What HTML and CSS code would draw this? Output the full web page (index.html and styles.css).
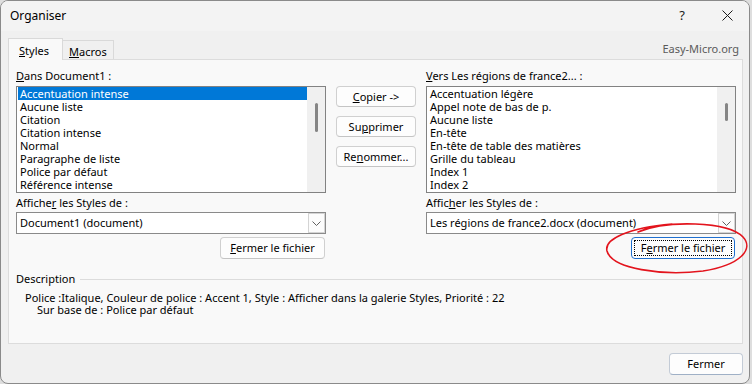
FILE: index.html
```html
<!DOCTYPE html>
<html lang="fr">
<head>
<meta charset="utf-8">
<title>Organiser</title>
<link rel="stylesheet" href="styles.css">
</head>
<body>
<div class="window">
  <div class="titlebar">
    <span class="title">Organiser</span>
    <div class="caption">
      <span class="cbtn help">?</span>
      <span class="cbtn close">
        <svg width="11" height="11" viewBox="0 0 11 11"><path d="M0.5 0.5 L10.5 10.5 M10.5 0.5 L0.5 10.5" stroke="#1a1a1a" stroke-width="1" fill="none"/></svg>
      </span>
    </div>
  </div>

  <div class="tabs">
    <div class="tab active"><u>S</u>tyles</div>
    <div class="tab"><u>M</u>acros</div>
    <div class="brand">Easy-Micro.org</div>
  </div>

  <div class="panel">
    <div class="org-grid">
      <div class="col">
        <div class="lbl"><u>D</u>ans Document1 :</div>
        <div class="listbox">
          <div class="items">
            <div class="item selected">Accentuation intense</div>
            <div class="item">Aucune liste</div>
            <div class="item">Citation</div>
            <div class="item">Citation intense</div>
            <div class="item">Normal</div>
            <div class="item">Paragraphe de liste</div>
            <div class="item">Police par défaut</div>
            <div class="item">Référence intense</div>
          </div>
          <div class="vscroll"><div class="thumb thumb-long"></div></div>
        </div>
        <div class="lbl lbl2">Affiche<u>r</u> les Styles de :</div>
        <div class="combo">
          <span class="combo-text">Document1 (document)</span>
          <span class="combo-btn"><svg width="9" height="5" viewBox="0 0 9 5"><path d="M0.5 0.5 L4.5 4.5 L8.5 0.5" stroke="#606060" stroke-width="1" fill="none"/></svg></span>
        </div>
        <div class="btnrow"><button class="btn close-file"><u>F</u>ermer le fichier</button></div>
      </div>

      <div class="mid">
        <button class="btn mbtn"><u>C</u>opier -&gt;</button>
        <button class="btn mbtn">Su<u>p</u>primer</button>
        <button class="btn mbtn">Re<u>n</u>ommer...</button>
      </div>

      <div class="col">
        <div class="lbl"><u>V</u>ers Les régions de france2... :</div>
        <div class="listbox">
          <div class="items">
            <div class="item">Accentuation légère</div>
            <div class="item">Appel note de bas de p.</div>
            <div class="item">Aucune liste</div>
            <div class="item">En-tête</div>
            <div class="item">En-tête de table des matières</div>
            <div class="item">Grille du tableau</div>
            <div class="item">Index 1</div>
            <div class="item">Index 2</div>
          </div>
          <div class="vscroll"><div class="thumb thumb-short"></div></div>
        </div>
        <div class="lbl lbl2">Affic<u>h</u>er les Styles de :</div>
        <div class="combo">
          <span class="combo-text">Les régions de france2.docx (document)</span>
          <span class="combo-btn"><svg width="9" height="5" viewBox="0 0 9 5"><path d="M0.5 0.5 L4.5 4.5 L8.5 0.5" stroke="#606060" stroke-width="1" fill="none"/></svg></span>
        </div>
        <div class="btnrow"><button class="btn close-file focused">F<u>e</u>rmer le fichier</button></div>
      </div>
    </div>

    <div class="desc">
      <div class="desc-head"><span>Description</span><span class="rule"></span></div>
      <div class="desc-line1">Police :Italique, Couleur de police : Accent 1, Style : Afficher dans la galerie Styles, Priorité : 22</div>
      <div class="desc-line2">Sur base de : Police par défaut</div>
    </div>
  </div>

  <div class="footer">
    <button class="btn ok">Fermer</button>
  </div>

  <svg class="annot" width="152" height="60" viewBox="0 0 152 60">
    <path d="M38 14 C66 2 128 3 143 19 C154 31 141 47 103 53 C62 58 12 51 7 33 C4 21 28 10 72 6" stroke="#e3141d" stroke-width="1.6" fill="none" stroke-linecap="round"/>
  </svg>
</div>
</body>
</html>
```

FILE: styles.css
```css
* { box-sizing: border-box; }

html, body {
  margin: 0;
  padding: 0;
  background: #dedede;
}

body {
  font-family: "Noto Sans", "Open Sans", sans-serif;
  font-size: 11px;
  color: #000;
}

u { text-decoration: underline; text-underline-offset: 1px; }

.window {
  position: relative;
  width: 750px;
  height: 384px;
  border: 1px solid #8a8a8a;
  border-radius: 8px;
  background: #f0f0f0;
  overflow: hidden;
}

.titlebar {
  height: 30px;
  background: #f3f3f3;
  display: flex;
  align-items: center;
}

.title {
  padding-left: 9px;
  font-size: 12px;
  line-height: 16px;
  padding-bottom: 1px;
}

.caption {
  margin-left: auto;
  display: flex;
  height: 100%;
}

.cbtn {
  display: flex;
  align-items: center;
  justify-content: center;
  height: 100%;
}

.help {
  width: 46px;
  font-size: 13px;
  padding-bottom: 2px;
  color: #1a1a1a;
}

.close {
  width: 44px;
  padding-bottom: 2px;
}

.tabs {
  height: 28px;
  display: flex;
  align-items: flex-end;
  padding-left: 7px;
}

.tab {
  height: 19px;
  padding: 3px 0 0 6px;
  width: 51px;
  line-height: 15px;
  border: 1px solid #d9d9d9;
  border-bottom: none;
  border-left: none;
  background: #f0f0f0;
}

.tab.active {
  position: relative;
  z-index: 1;
  height: 22px;
  width: 55px;
  margin-bottom: -1px;
  padding: 4px 0 0 10px;
  border-left: 1px solid #d9d9d9;
  background: #f9f9f9;
}

.brand {
  margin-left: auto;
  margin-right: 10px;
  margin-bottom: 3px;
  line-height: 15px;
  font-size: 11px;
  color: #5a5a5a;
}

.panel {
  margin: 0 6px 0 7px;
  height: 285px;
  border: 1px solid #dcdcdc;
  background: #f9f9f9;
  padding: 8px 0 0 7px;
}

.org-grid {
  display: grid;
  grid-template-columns: 310px 80px 310px;
  column-gap: 10px;
}

.col {
  display: flex;
  flex-direction: column;
}

.lbl {
  line-height: 15px;
  height: 15px;
  margin-bottom: 3px;
}

.lbl2 {
  margin-top: 2px;
  margin-bottom: 2px;
}

.listbox {
  height: 107px;
  border: 1px solid #828282;
  background: #fff;
  display: flex;
  padding: 0 0 0 1px;
}

.items {
  flex: 1;
  padding-top: 0;
}

.item {
  line-height: 13px;
  height: 13px;
  padding-left: 2px;
  white-space: nowrap;
}

.item.selected {
  background: #0078d7;
  color: #fff;
}

.vscroll {
  width: 18px;
  background: #f0f0f0;
  padding: 16px 0 0 8px;
}

.thumb {
  width: 3px;
  background: #858585;
  border-radius: 2px;
}

.thumb-long { height: 29px; }
.thumb-short { height: 18px; }

.combo {
  height: 22px;
  border: 1px solid #8a8a8a;
  background: #fff;
  display: flex;
  align-items: stretch;
}

.combo-text {
  flex: 1;
  padding-left: 3px;
  line-height: 19px;
  white-space: nowrap;
}

.combo-btn {
  width: 17px;
  border: 1px solid #d4d4d4;
  background: #fcfcfc;
  display: flex;
  align-items: center;
  justify-content: center;
}

.btnrow {
  display: flex;
  justify-content: flex-end;
  margin-top: 3px;
  padding-right: 1px;
}

.btn {
  font-family: "Noto Sans", "Open Sans", sans-serif;
  font-size: 11px;
  color: #000;
  background: #fdfdfd;
  border: 1px solid #d0d0d0;
  border-bottom-color: #c4c4c4;
  border-radius: 4px;
  padding: 0;
  margin: 0;
  line-height: 18px;
  text-align: center;
}

.close-file {
  width: 105px;
  height: 22px;
}

.close-file.focused {
  width: 104px;
  position: relative;
  border: 1px solid #1f6fcf;
}

.close-file.focused::after {
  content: "";
  position: absolute;
  left: 2px;
  right: 2px;
  top: 2px;
  bottom: 2px;
  border: 1px dotted #000;
}

.mid {
  display: flex;
  flex-direction: column;
  gap: 9px;
  padding-top: 18px;
}

.mbtn {
  width: 80px;
  height: 21px;
}

.desc {
  margin-top: 12px;
}

.desc-head {
  display: flex;
  align-items: center;
  line-height: 15px;
  height: 15px;
}

.rule {
  flex: 1;
  height: 1px;
  background: #dcdcdc;
  margin-left: 5px;
  margin-top: 1px;
}

.desc-line1 {
  margin-top: 6px;
  padding-left: 9px;
  line-height: 12px;
  white-space: nowrap;
}

.desc-line2 {
  padding-left: 21px;
  line-height: 12px;
}

.footer {
  display: flex;
  justify-content: flex-end;
  padding: 9px 6px 0 0;
}

.ok {
  width: 74px;
  height: 22px;
  border-color: #c3cbd6;
  border-bottom-color: #9fb0c6;
}

.annot {
  position: absolute;
  left: 599px;
  top: 217px;
}
```
